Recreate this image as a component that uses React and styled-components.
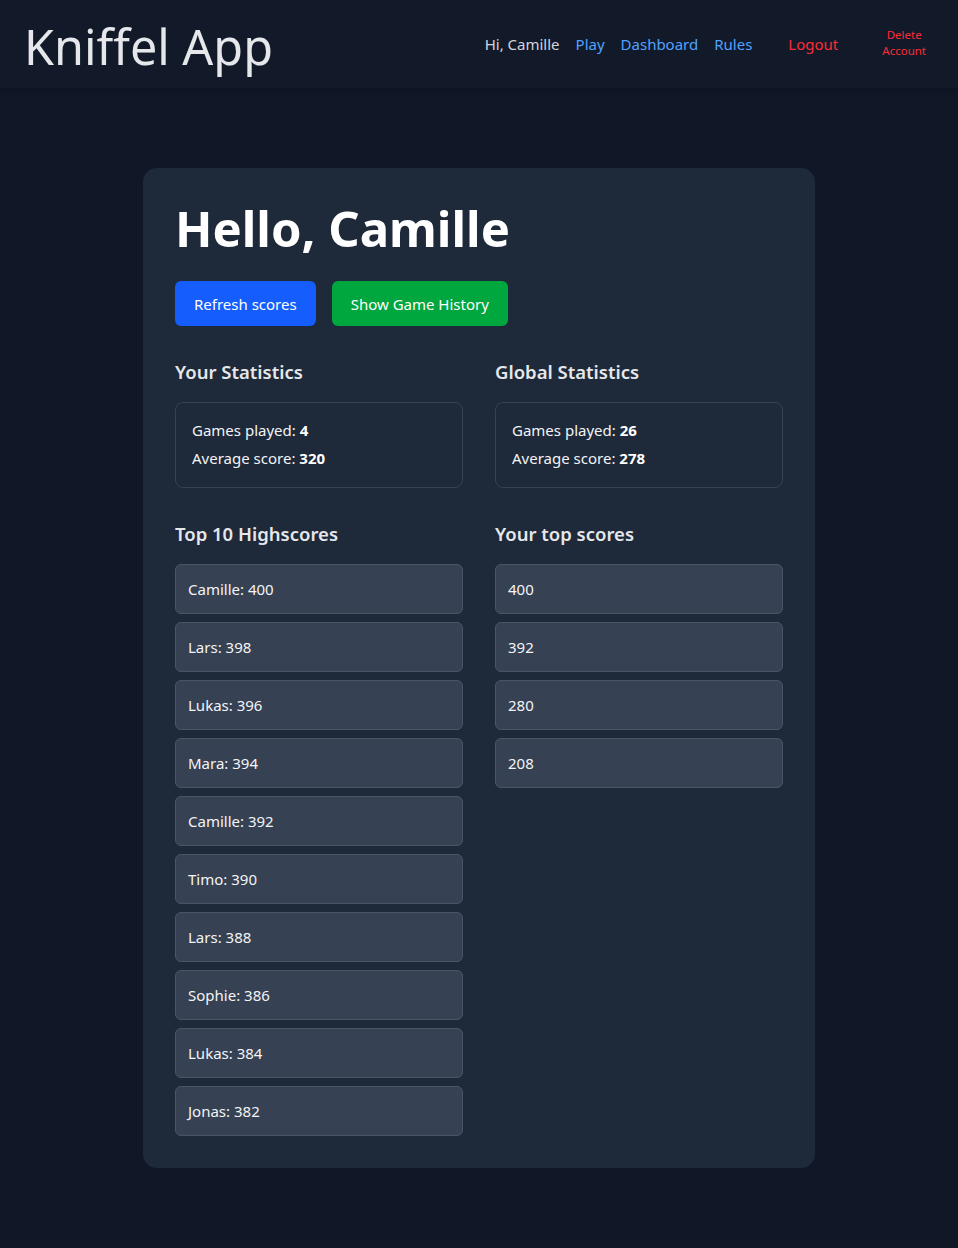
import React from "react";
import styled, { createGlobalStyle } from "styled-components";

const Global = createGlobalStyle`
  html, body { margin: 0; padding: 0; background: #101828; }
  body { font-family: "Noto Sans", "Open Sans", sans-serif; color: #f3f4f6; }
  * { box-sizing: border-box; }
`;

const Header = styled.header`
  height: 88px;
  display: flex;
  align-items: center;
  justify-content: space-between;
  padding: 0 24px;
  background: #121a2a;
  box-shadow: 0 2px 6px rgba(0, 0, 0, 0.25);
`;

const Brand = styled.h1`
  margin: 0;
  font-size: 48.5px;
  font-weight: 400;
  line-height: 1;
  color: #e5e7eb;
  transform: translateY(2px);
`;

const Nav = styled.nav`
  display: flex;
  align-items: center;
  gap: 16px;
  font-size: 15px;
  line-height: 24px;
`;

const Greeting = styled.span`
  color: #d1d5db;
`;

const NavLink = styled.a`
  color: #51a2ff;
  text-decoration: none;
`;

const DangerButton = styled.button`
  background: none;
  border: none;
  color: #fb2c36;
  font-family: inherit;
  font-size: ${(p) => (p.$small ? "11.5px" : "15px")};
  line-height: ${(p) => (p.$small ? "16px" : "24px")};
  padding: ${(p) => (p.$small ? "0 8px 2px" : "0 20px")};
  text-align: center;
  cursor: pointer;
`;

const Main = styled.main`
  padding: 80px 0;
  display: flex;
  justify-content: center;
`;

const Card = styled.section`
  width: 672px;
  background: #1e2939;
  border-radius: 14px;
  padding: 32px;
`;

const Title = styled.h2`
  margin: 0 0 24px;
  font-size: 49px;
  line-height: 57px;
  font-weight: 700;
  color: #ffffff;
`;

const Actions = styled.div`
  display: flex;
  gap: 16px;
  margin-bottom: 32px;
`;

const Button = styled.button`
  height: 45px;
  padding: 0 19px;
  border: none;
  border-radius: 6px;
  background: ${(p) => p.$bg};
  color: #fff;
  font-family: inherit;
  font-size: 15px;
`;

const Grid = styled.div`
  display: grid;
  grid-template-columns: 1fr 1fr;
  column-gap: 32px;
  row-gap: 32px;
`;

const Heading = styled.h3`
  margin: 0 0 16px;
  font-size: 18.5px;
  line-height: 28px;
  font-weight: 600;
  color: #e5e7eb;
`;

const StatBox = styled.div`
  border: 1px solid #364153;
  border-radius: 8px;
  padding: 15px 16px 17px;
  display: flex;
  flex-direction: column;
  gap: 4px;
`;

const StatLine = styled.p`
  margin: 0;
  font-size: 15px;
  line-height: 24px;
  color: #f3f4f6;
  b { font-weight: 700; color: #fff; }
`;

const List = styled.ul`
  list-style: none;
  margin: 0;
  padding: 0;
  display: flex;
  flex-direction: column;
  gap: 8px;
`;

const Item = styled.li`
  background: #364153;
  border: 1px solid #4a5565;
  border-radius: 6px;
  padding: 12px;
  font-size: 15px;
  line-height: 24px;
  color: #f3f4f6;
`;

const highscores = [
  ["Camille", 400], ["Lars", 398], ["Lukas", 396], ["Mara", 394], ["Camille", 392],
  ["Timo", 390], ["Lars", 388], ["Sophie", 386], ["Lukas", 384], ["Jonas", 382],
];
const myScores = [400, 392, 280, 208];

export default function App() {
  return (
    <>
      <Global />
      <Header>
        <Brand>Kniffel App</Brand>
        <Nav>
          <Greeting>Hi, Camille</Greeting>
          <NavLink href="#">Play</NavLink>
          <NavLink href="#">Dashboard</NavLink>
          <NavLink href="#">Rules</NavLink>
          <DangerButton>Logout</DangerButton>
          <DangerButton $small>Delete<br />Account</DangerButton>
        </Nav>
      </Header>
      <Main>
        <Card>
          <Title>Hello, Camille</Title>
          <Actions>
            <Button $bg="#155dfc">Refresh scores</Button>
            <Button $bg="#00a63e">Show Game History</Button>
          </Actions>
          <Grid>
            <div>
              <Heading>Your Statistics</Heading>
              <StatBox>
                <StatLine>Games played: <b>4</b></StatLine>
                <StatLine>Average score: <b>320</b></StatLine>
              </StatBox>
            </div>
            <div>
              <Heading>Global Statistics</Heading>
              <StatBox>
                <StatLine>Games played: <b>26</b></StatLine>
                <StatLine>Average score: <b>278</b></StatLine>
              </StatBox>
            </div>
            <div>
              <Heading>Top 10 Highscores</Heading>
              <List>
                {highscores.map(([n, s], i) => (
                  <Item key={i}>{n}: {s}</Item>
                ))}
              </List>
            </div>
            <div>
              <Heading>Your top scores</Heading>
              <List>
                {myScores.map((s, i) => (
                  <Item key={i}>{s}</Item>
                ))}
              </List>
            </div>
          </Grid>
        </Card>
      </Main>
    </>
  );
}
